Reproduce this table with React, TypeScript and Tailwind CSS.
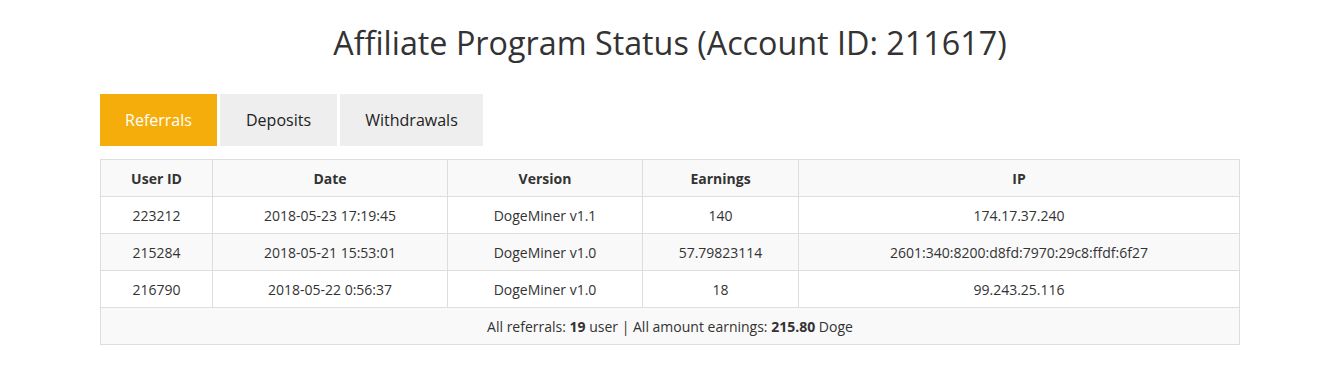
const rows = [
  { id: "223212", date: "2018-05-23 17:19:45", version: "DogeMiner v1.1", earnings: "140", ip: "174.17.37.240" },
  { id: "215284", date: "2018-05-21 15:53:01", version: "DogeMiner v1.0", earnings: "57.79823114", ip: "2601:340:8200:d8fd:7970:29c8:ffdf:6f27" },
  { id: "216790", date: "2018-05-22 0:56:37", version: "DogeMiner v1.0", earnings: "18", ip: "99.243.25.116" },
];

const tabCls = "h-[52px] px-6 text-[16px] leading-[52px]";
const thCls = "h-[37px] border border-[#dddddd] px-2 text-[14px] font-bold";
const tdCls = "h-[37px] border border-[#dddddd] px-2 text-[14px]";

export default function App() {
  return (
    <div className="min-h-[367px] bg-white font-['Open_Sans','Noto_Sans',sans-serif] text-[#333333]">
      <div className="ml-[100px] w-[1140px]">
        <h1 className="pt-[23px] text-center text-[32.3px] font-normal leading-[38px]">
          Affiliate Program Status (Account ID: 211617)
        </h1>

        <div className="mt-[33px] flex gap-[3px]">
          <button type="button" className={`${tabCls} w-[117px] bg-[#f4ad0a] text-white`}>
            Referrals
          </button>
          <button type="button" className={`${tabCls} w-[117px] bg-[#eeeeee] text-[#222222]`}>
            Deposits
          </button>
          <button type="button" className={`${tabCls} w-[143px] bg-[#eeeeee] text-[#222222]`}>
            Withdrawals
          </button>
        </div>

        <table className="mt-[13px] w-full border-collapse text-center">
          <thead>
            <tr className="bg-[#f9f9f9]">
              <th className={`${thCls} w-[112px]`}>User ID</th>
              <th className={`${thCls} w-[235px]`}>Date</th>
              <th className={`${thCls} w-[195px]`}>Version</th>
              <th className={`${thCls} w-[156px]`}>Earnings</th>
              <th className={thCls}>IP</th>
            </tr>
          </thead>
          <tbody>
            {rows.map((r, i) => (
              <tr key={r.id} className={i % 2 === 1 ? "bg-[#f9f9f9]" : "bg-white"}>
                <td className={tdCls}>{r.id}</td>
                <td className={tdCls}>{r.date}</td>
                <td className={tdCls}>{r.version}</td>
                <td className={tdCls}>{r.earnings}</td>
                <td className={tdCls}>{r.ip}</td>
              </tr>
            ))}
            <tr className="bg-[#f9f9f9]">
              <td colSpan={5} className={tdCls}>
                All referrals: <b>19</b> user | All amount earnings: <b>215.80</b> Doge
              </td>
            </tr>
          </tbody>
        </table>
      </div>
    </div>
  );
}
